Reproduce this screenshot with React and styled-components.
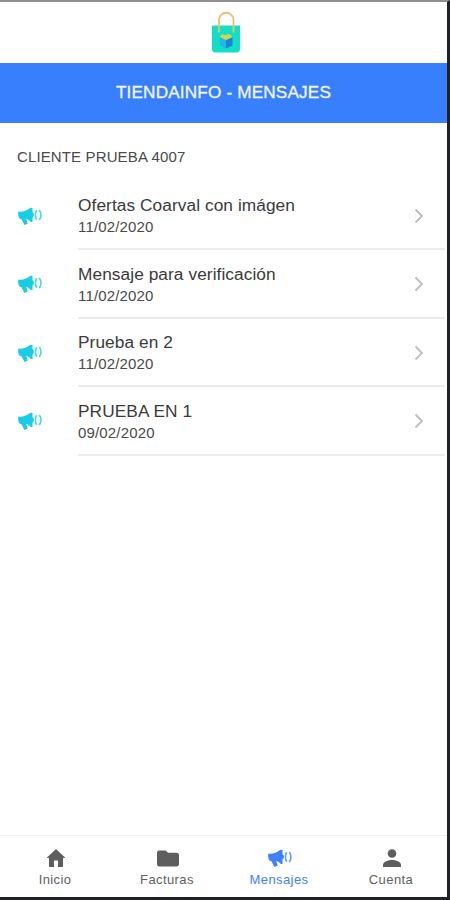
import React from "react";
import styled, { createGlobalStyle } from "styled-components";

const GlobalStyle = createGlobalStyle`
	* {
		box-sizing: border-box;
	}

	body {
		margin: 0;
		font-family: "Liberation Sans", Arial, sans-serif;
	}
`;

const Screen = styled.div`
	display: flex;
	flex-direction: column;
	width: 450px;
	height: 900px;
	background: #fff;
	border-top: 2px solid #8f8f8f;
	border-right: 3px solid #202124;
	border-bottom: 3px solid #202124;
	overflow: hidden;
`;

const LogoBar = styled.header`
	display: flex;
	justify-content: center;
	height: 61px;
	padding: 9px 0 0 5px;
`;

const TitleBar = styled.div`
	height: 60px;
	background: #387ffe;
	text-align: center;
`;

const Title = styled.h1`
	margin: 0;
	font-size: 17.2px;
	font-weight: 400;
	line-height: 59px;
	letter-spacing: 0.15px;
	color: #f4f8ff;
	-webkit-text-stroke: 0.3px #f4f8ff;
`;

const Content = styled.main`
	flex: 1;
	padding-top: 24px;
`;

const ClientName = styled.h2`
	margin: 0;
	padding-left: 17px;
	height: 34.5px;
	font-size: 15px;
	font-weight: 400;
	line-height: 20px;
	letter-spacing: 0.13px;
	color: #4a4a4a;
`;

const List = styled.ul`
	margin: 0;
	padding: 0;
	list-style: none;
`;

const Item = styled.li`
	display: flex;
	height: 68.6px;
	padding-left: 18px;
	color: #18cde5;
`;

const ItemIcon = styled.div`
	width: 60px;
	padding-top: 25px;
`;

const ItemBody = styled.div`
	display: flex;
	flex: 1;
	justify-content: space-between;
	margin-right: 2px;
	padding: 12.5px 20px 0 0;
	border-bottom: 2px solid #ebebeb;
`;

const ItemTitle = styled.div`
	font-size: 17.3px;
	line-height: 22px;
	letter-spacing: 0.07px;
	color: #3a3a3a;
`;

const ItemDate = styled.div`
	font-size: 15px;
	line-height: 21px;
	letter-spacing: 0.16px;
	color: #4a4a4a;
`;

const TabBar = styled.nav`
	display: grid;
	grid-template-columns: repeat(4, 112px);
	height: 62px;
	margin-left: -1px;
	border-top: 1px solid #ededed;
`;

const Tab = styled.div`
	display: flex;
	flex-direction: column;
	align-items: center;
	padding-top: 10px;
	color: ${(props) => (props.$active ? "#3f80fb" : "#5e5e5e")};
`;

const TabIcon = styled.div`
	display: flex;
	align-items: center;
	justify-content: center;
	height: 24px;
	padding-left: 1px;
`;

const TabLabel = styled.span`
	font-size: 13px;
	line-height: 20px;
	letter-spacing: 0.4px;
`;

const Bag = () => (
	<svg width="28" height="42" viewBox="0 0 28 42" fill="none">
		<path d="M0 14.5h28V38a3.5 3.5 0 0 1-3.5 3.5h-21A3.5 3.5 0 0 1 0 38z" fill="#13dfc7" />
		<path d="M7 21.5V9a7.2 7.2 0 0 1 14.5 0v12.5" stroke="#efbd70" strokeWidth="1.8" />
		<path d="M8 26l6 3v8.5l-6-3z" fill="#27b5e8" />
		<path d="M20.5 26L14 29v8.5l6.5-3z" fill="#1686dc" />
		<path d="M8 26l2-3 3 1.2 4-1.4 3.5 3.2-6.5 3z" fill="#d5d552" />
	</svg>
);

const Megaphone = () => (
	<svg width="24" height="18" viewBox="0 0 24 18" fill="currentColor">
		<path d="M.3 4.5c3.5.8 8-.4 12.2-3.7l2 .2v4.3c1.9.9 1.900 4.2 0 5.1v4.5h-1.7c-1.5-1.6-3-2.6-4.600-3.2l1.5 5-3.2 1.2-3.200-5.8C.6 12.1-.2 8 .3 4.5z" />
		<path
			d="M18.7 3.2c-1.7 2.6-1.7 7 0 9.6M21.3 3c2.2 2.8 2.2 7.2 0 10"
			fill="none"
			stroke="currentColor"
			strokeWidth="1.6"
			opacity="0.8"
		/>
	</svg>
);

const Home = () => (
	<svg width="20" height="18" viewBox="0 0 20 18" fill="currentColor">
		<path d="M10 0l9.5 9H17v9h-5v-6.5H8V18H3V9H.5z" />
	</svg>
);

const Folder = () => (
	<svg width="22" height="17" viewBox="0 0 22 17" fill="currentColor">
		<path d="M2.2.5h6.5l2.3 2.3h8.8c1.2 0 2.2 1 2.2 2.2v9.2c0 1.2-1 2.2-2.2 2.2H2.2C1 16.4 0 15.4 0 14.2V2.7C0 1.500 1 .5 2.2.5z" />
	</svg>
);

const Person = () => (
	<svg width="18" height="18" viewBox="0 0 18 18" fill="currentColor">
		<circle cx="9" cy="4.5" r="4.3" />
		<path d="M0 18v-2.2C0 12.5 5.5 11 9 11s9 1.5 9 4.8V18z" />
	</svg>
);

const ChevronIcon = styled.svg`
	margin-top: 13.5px;
	margin-right: 1px;
`;

const Chevron = () => (
	<ChevronIcon width="10" height="16" viewBox="0 0 10 16" fill="none">
		<path d="M1.5 1.5L8 8l-6.5 6.5" stroke="#bdbdbd" strokeWidth="1.8" />
	</ChevronIcon>
);

const messages = [
	{ title: "Ofertas Coarval con imágen", date: "11/02/2020" },
	{ title: "Mensaje para verificación", date: "11/02/2020" },
	{ title: "Prueba en 2", date: "11/02/2020" },
	{ title: "PRUEBA EN 1", date: "09/02/2020" },
];

const tabs = [
	{ label: "Inicio", icon: Home },
	{ label: "Facturas", icon: Folder },
	{ label: "Mensajes", icon: Megaphone, active: true },
	{ label: "Cuenta", icon: Person },
];

const App = () => {
	return (
		<>
			<GlobalStyle />
			<Screen>
				<LogoBar>
					<Bag />
				</LogoBar>
				<TitleBar>
					<Title>TIENDAINFO - MENSAJES</Title>
				</TitleBar>
				<Content>
					<ClientName>CLIENTE PRUEBA 4007</ClientName>
					<List>
						{messages.map(({ title, date }) => (
							<Item key={title}>
								<ItemIcon>
									<Megaphone />
								</ItemIcon>
								<ItemBody>
									<div>
										<ItemTitle>{title}</ItemTitle>
										<ItemDate>{date}</ItemDate>
									</div>
									<Chevron />
								</ItemBody>
							</Item>
						))}
					</List>
				</Content>
				<TabBar>
					{tabs.map(({ label, icon: Icon, active }) => (
						<Tab key={label} $active={active}>
							<TabIcon>
								<Icon />
							</TabIcon>
							<TabLabel>{label}</TabLabel>
						</Tab>
					))}
				</TabBar>
			</Screen>
		</>
	);
};

export default App;
